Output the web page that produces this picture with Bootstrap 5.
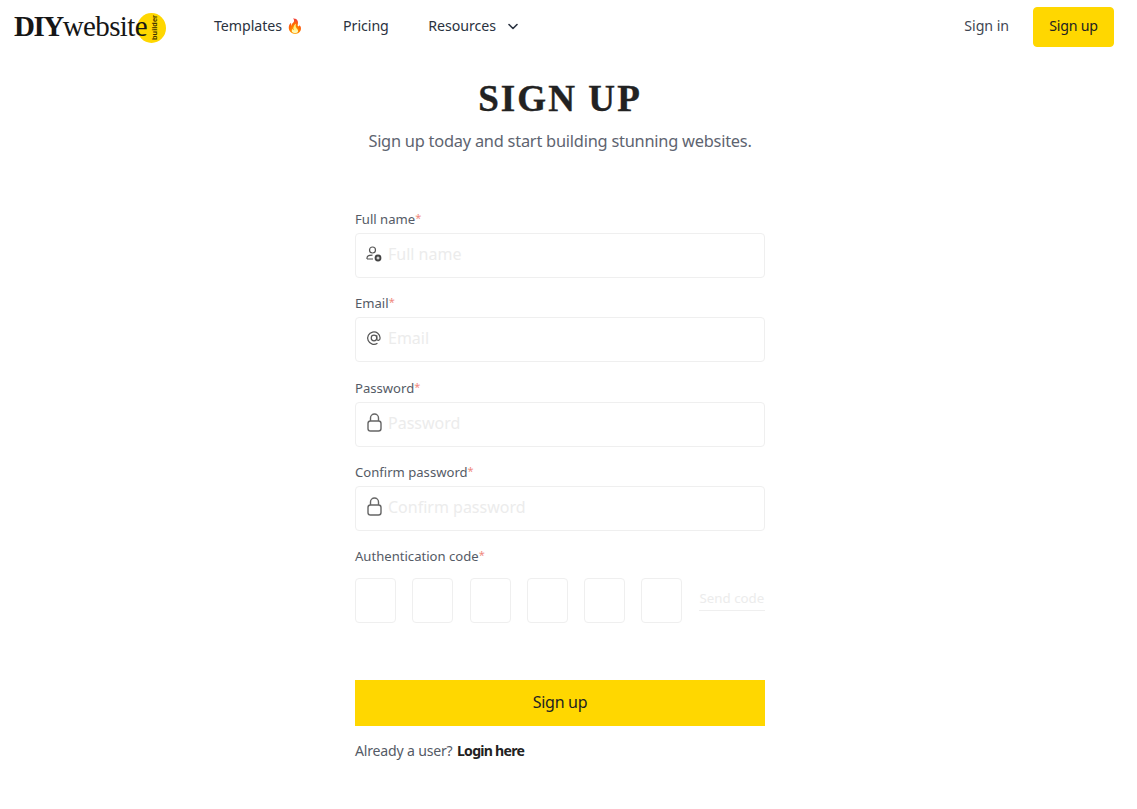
<!DOCTYPE html>
<html lang="en">
<head>
<meta charset="utf-8">
<title>Sign up</title>
<link href="https://cdn.jsdelivr.net/npm/bootstrap@5.3.0/dist/css/bootstrap.min.css" rel="stylesheet">
<style>
body{font-family:"Noto Sans",sans-serif;color:#424242;background:#fff}
.top-bar{height:54px;padding:0 23px 0 13px}
.logo{position:relative;display:block;width:154px;height:36px;color:#161616;text-decoration:none}
.logo-circle{position:absolute;left:124px;top:4px;width:29px;height:30px;border-radius:50%;background:#ffd700}
.logo-text{position:absolute;left:1px;top:3px;font:29px/1 "Liberation Serif",serif;letter-spacing:-.6px;white-space:nowrap}
.logo-text b{font-weight:700;letter-spacing:-1.5px}
.logo-sub{position:absolute;left:137px;top:6px;height:25px;writing-mode:vertical-rl;transform:rotate(180deg);font:700 7.5px/10px "Liberation Sans",sans-serif;text-align:center;color:#3a3000}
.main-links{margin-left:47px;gap:39.5px}
.main-links a,.side-link{font-size:14.2px;letter-spacing:-.05px;color:#2a3240;text-decoration:none;white-space:nowrap;padding-bottom:2px}
.side-link{margin-right:24px;color:#3f4652}
.top-btn{width:81px;height:40px;background:#ffd700;border:1px solid #ffd700;border-radius:4px;font-size:14.2px;letter-spacing:-.25px;color:#222;padding:0 0 2px;display:flex;align-items:center;justify-content:center}
.caret-icon{margin-left:11px;width:12px;height:12px}
.page-body{padding-right:17px}
.page-title{margin:23px 0 0;text-align:center;font:700 37px/44px "Liberation Serif",serif;letter-spacing:2.1px;-webkit-text-stroke:.4px #222;color:#222}
.page-sub{margin:7px 0 0;text-align:center;font-size:16.4px;letter-spacing:-.24px;line-height:26px;color:#5e6470}
.form-wrap{width:410px;margin:56px auto 0}
.field-label{display:block;font-size:13.1px;line-height:18px;color:#555b66;margin:0 0 5px}
.req{color:#f08a80;font-size:11px;line-height:0;vertical-align:2px}
.input-wrap{position:relative;height:45px;margin-bottom:16px}
.input-wrap.spaced{margin-bottom:17px}
.input-wrap svg{position:absolute;left:10px;top:11px;width:18px;height:20px}
.text-input{width:100%;height:100%;border:1px solid #efefef;border-radius:4px;padding:0 10px 4px 32px;font-size:16px;color:#333;background:#fff;outline:0}
.text-input::placeholder{color:#ececec;opacity:1}
.code-row{display:flex;align-items:center;height:45px;margin-top:13px}
.code-box{width:41px;height:45px;border:1px solid #efefef;border-radius:4px;margin-right:16.3px;background:#fff;outline:0;flex:none}
.send-code{font-size:13.3px;line-height:22px;color:#ececec;border-bottom:1px solid #efefef;text-decoration:none;white-space:nowrap;flex:1;text-align:center;margin-top:-3px;padding-bottom:1px}
.submit-btn{display:block;width:100%;height:46px;margin-top:57px;background:#ffd700;border:0;border-radius:0;color:#222;font-size:16px;letter-spacing:-.3px;padding:0 0 3px}
.login-line{margin:14px 0 0;font-size:14.1px;letter-spacing:-.2px;line-height:22px;color:#555b66}
.login-line a{color:#222;font-weight:700;letter-spacing:-.75px;text-decoration:none;margin-left:1px}
</style>
</head>
<body>
<nav class="top-bar d-flex align-items-center">
  <a class="logo" href="#">
    <span class="logo-circle"></span>
    <span class="logo-text"><b>DIY</b>website</span>
    <span class="logo-sub">builder</span>
  </a>
  <div class="main-links d-flex align-items-center">
    <a href="#">Templates 🔥</a>
    <a href="#">Pricing</a>
    <a href="#" class="d-flex align-items-center">Resources
      <svg class="caret-icon" viewBox="0 0 12 12" fill="none" stroke="#2a3240" stroke-width="1.6" stroke-linecap="round" stroke-linejoin="round"><path d="M2 4.5 6 8.5 10 4.5"/></svg>
    </a>
  </div>
  <div class="ms-auto d-flex align-items-center">
    <a class="side-link" href="#">Sign in</a>
    <button class="top-btn" type="button">Sign up</button>
  </div>
</nav>

<main class="page-body">
<h1 class="page-title">SIGN UP</h1>
<p class="page-sub">Sign up today and start building stunning websites.</p>

<form class="form-wrap">
  <label class="field-label">Full name<span class="req">*</span></label>
  <div class="input-wrap">
    <svg viewBox="0 0 18 20" fill="none" stroke="#555" stroke-width="1.2"><circle cx="7.5" cy="6" r="3"/><path d="M2 15v-1c0-1.8 2-2.8 5.5-2.8M2 15h6"/><circle cx="13" cy="14" r="3.4" fill="#444" stroke="none"/><path d="M11.5 14h3M13 12.5v3" stroke="#fff" stroke-width="1"/></svg>
    <input class="text-input" placeholder="Full name">
  </div>
  <label class="field-label">Email<span class="req">*</span></label>
  <div class="input-wrap spaced">
    <svg viewBox="1 0 16 18" fill="none" stroke="#555" stroke-width="1.1"><circle cx="9" cy="9" r="2.5"/><path d="M11.5 6.5v3.3c0 2 3 2 3-.8a5.6 5.6 0 1 0-2.4 4.7"/></svg>
    <input class="text-input" placeholder="Email">
  </div>
  <label class="field-label">Password<span class="req">*</span></label>
  <div class="input-wrap">
    <svg viewBox="0 1 18 20" fill="none" stroke="#666" stroke-width="1.4"><rect x="3" y="9" width="13" height="10" rx="2.5"/><path d="M5.5 9V6a4 4 0 0 1 8 0v3"/></svg>
    <input class="text-input" placeholder="Password">
  </div>
  <label class="field-label">Confirm password<span class="req">*</span></label>
  <div class="input-wrap">
    <svg viewBox="0 1 18 20" fill="none" stroke="#666" stroke-width="1.4"><rect x="3" y="9" width="13" height="10" rx="2.5"/><path d="M5.5 9V6a4 4 0 0 1 8 0v3"/></svg>
    <input class="text-input" placeholder="Confirm password">
  </div>
  <label class="field-label">Authentication code<span class="req">*</span></label>
  <div class="code-row">
    <input class="code-box"><input class="code-box"><input class="code-box"><input class="code-box"><input class="code-box"><input class="code-box">
    <a class="send-code" href="#">Send code</a>
  </div>
  <button class="submit-btn" type="button">Sign up</button>
  <p class="login-line">Already a user? <a href="#">Login here</a></p>
</form>
</main>
</body>
</html>
